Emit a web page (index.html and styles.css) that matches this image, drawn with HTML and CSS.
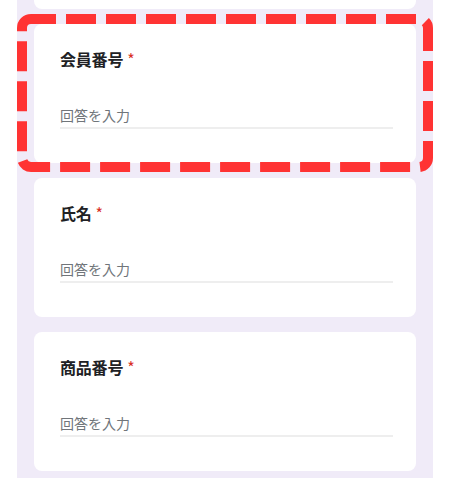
FILE: index.html
```html
<!DOCTYPE html>
<html lang="ja">
<head>
<meta charset="utf-8">
<link rel="stylesheet" href="styles.css">
</head>
<body>
<div class="page">
  <div class="card card-stub"></div>
  <div class="card">
    <div class="q-title">会員番号<span class="req">*</span></div>
    <div class="answer">回答を入力</div>
  </div>
  <div class="card">
    <div class="q-title">氏名<span class="req">*</span></div>
    <div class="answer">回答を入力</div>
  </div>
  <div class="card">
    <div class="q-title">商品番号<span class="req">*</span></div>
    <div class="answer">回答を入力</div>
  </div>
  <svg class="highlight" width="416" height="158" viewBox="0 0 416 158">
    <rect x="5" y="5" width="406" height="148" rx="9" ry="9" fill="none" stroke="#ff3333" stroke-width="10" stroke-dasharray="30 10" stroke-dashoffset="5"/>
  </svg>
</div>
</body>
</html>
```
FILE: styles.css
```css
* { box-sizing: border-box; }
html, body { margin: 0; padding: 0; background: #ffffff; }
body {
  font-family: "Noto Sans CJK JP", "Noto Sans", sans-serif;
}
.page {
  position: relative;
  width: 416px;
  min-height: 478px;
  margin: 0 auto;
  padding: 0 17px;
  background: #f0ebf8;
  display: flex;
  flex-direction: column;
  gap: 15px;
}
.card {
  background: #ffffff;
  border-radius: 8px;
  height: 139px;
  padding: 23px 24px 0 26px;
  display: flex;
  flex-direction: column;
}
.card-stub {
  height: 9px;
  padding: 0;
  border-radius: 0 0 8px 8px;
}
.q-title {
  font-size: 16px;
  line-height: 24px;
  font-weight: 700;
  color: #202124;
  letter-spacing: -0.2px;
}
.req {
  color: #d93025;
  font-weight: 400;
  margin-left: 4px;
}
.answer {
  margin-top: 34px;
  width: 333px;
  font-size: 14px;
  line-height: 20px;
  color: #70757a;
  padding-bottom: 2px;
  border-bottom: 2px solid #eeeeee;
}
.highlight {
  position: absolute;
  left: 0;
  top: 14px;
}
```
